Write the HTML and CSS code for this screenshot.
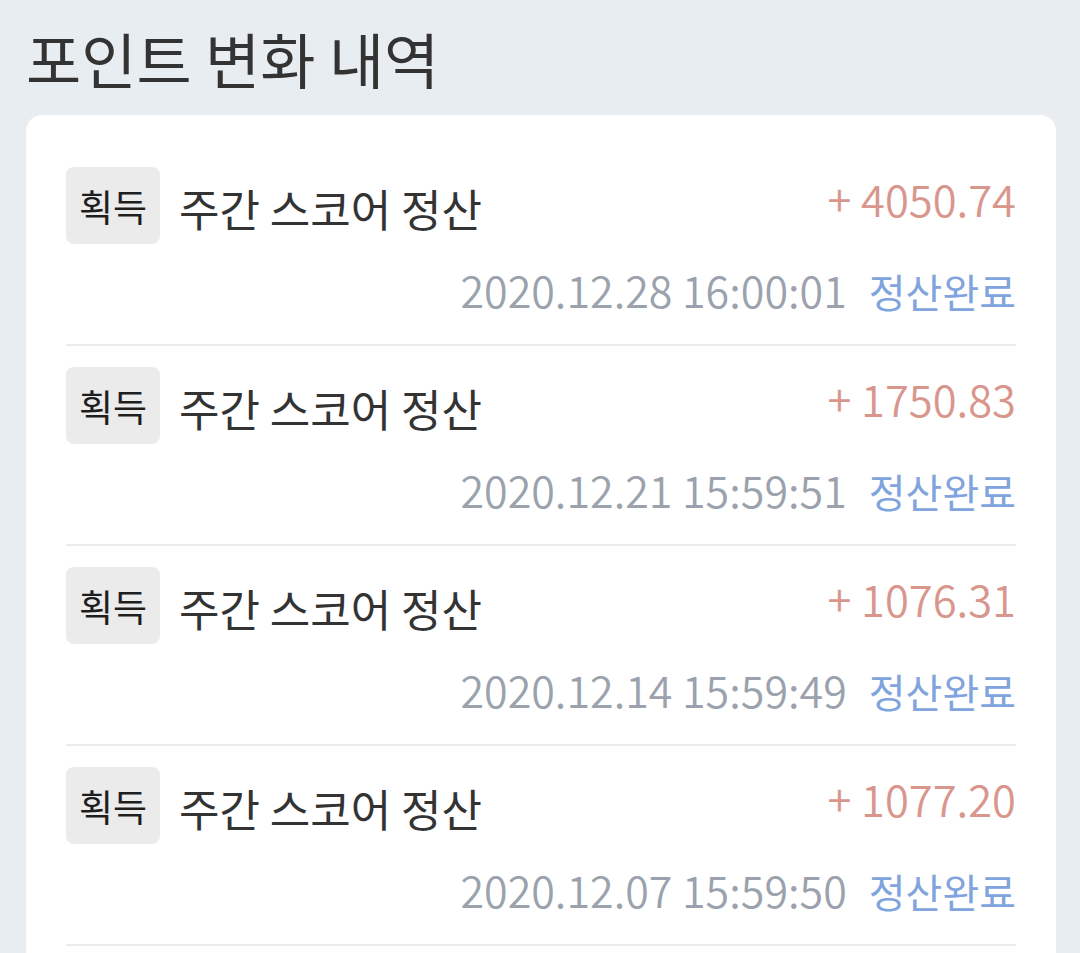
FILE: index.html
```html
<!DOCTYPE html>
<html>
<head>
	<meta charset="utf-8">
	<title>포인트 변화 내역</title>
	<meta name="viewport" content="width=device-width, initial-scale=1.0">
	<link rel="stylesheet" href="styles.css">
</head>
<body>
	<h1 class="page-title">포인트 변화 내역</h1>

	<div class="card">
		<div class="row">
			<div class="row-top">
				<span class="badge">획득</span>
				<span class="row-title">주간 스코어 정산</span>
				<span class="amount">+ 4050.74</span>
			</div>
			<div class="row-meta">
				<span class="date">2020.12.28 16:00:01</span>
				<span class="status">정산완료</span>
			</div>
		</div>
		<div class="row">
			<div class="row-top">
				<span class="badge">획득</span>
				<span class="row-title">주간 스코어 정산</span>
				<span class="amount">+ 1750.83</span>
			</div>
			<div class="row-meta">
				<span class="date">2020.12.21 15:59:51</span>
				<span class="status">정산완료</span>
			</div>
		</div>
		<div class="row">
			<div class="row-top">
				<span class="badge">획득</span>
				<span class="row-title">주간 스코어 정산</span>
				<span class="amount">+ 1076.31</span>
			</div>
			<div class="row-meta">
				<span class="date">2020.12.14 15:59:49</span>
				<span class="status">정산완료</span>
			</div>
		</div>
		<div class="row">
			<div class="row-top">
				<span class="badge">획득</span>
				<span class="row-title">주간 스코어 정산</span>
				<span class="amount">+ 1077.20</span>
			</div>
			<div class="row-meta">
				<span class="date">2020.12.07 15:59:50</span>
				<span class="status">정산완료</span>
			</div>
		</div>
	</div>
</body>
</html>
```

FILE: styles.css
```css
* {
	padding: 0px;
	margin: 0px;
	box-sizing: border-box;
}
body {
	background-color: #e8edf1;
	font-family: "Noto Sans CJK KR", "Noto Sans", sans-serif;
	padding: 27px 24px 0px 26px;
	color: #333333;
}
.page-title {
	font-size: 60px;
	font-weight: normal;
	line-height: 62px;
	margin-bottom: 26px;
	color: #333333;
}
.card {
	background-color: white;
	border-radius: 16px;
	padding: 31px 40px 60px 40px;
}
.row {
	padding: 21px 0px 30px 0px;
	border-bottom: 2px solid #ececec;
}
.row-top {
	display: flex;
	align-items: center;
	height: 77px;
}
.badge {
	width: 94px;
	height: 77px;
	display: flex;
	align-items: center;
	justify-content: center;
	background-color: #ebebeb;
	border-radius: 8px;
	font-size: 37px;
	color: #1e1e1e;
}
.row-title {
	margin-left: 19px;
	margin-top: 4px;
	font-size: 44px;
	line-height: 44px;
	color: #333333;
}
.amount {
	margin-left: auto;
	margin-bottom: 14px;
	font-size: 43.5px;
	line-height: 44px;
	font-weight: 350;
	color: #d9968c;
}
.row-meta {
	display: flex;
	justify-content: flex-end;
	align-items: baseline;
	margin-top: 20px;
	height: 50px;
	line-height: 50px;
}
.date {
	font-size: 43px;
	font-weight: 350;
	color: #9ba2ad;
}
.status {
	margin-left: 22px;
	font-size: 40px;
	color: #80a4dd;
}
```
